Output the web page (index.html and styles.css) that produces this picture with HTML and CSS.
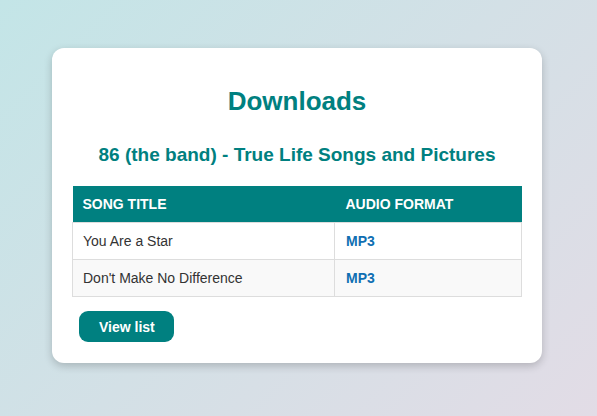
FILE: index.html
```html
<!DOCTYPE html>
<html lang="en">
<head>
<meta charset="utf-8">
<title>Downloads</title>
<link rel="stylesheet" href="styles.css">
</head>
<body>
  <main class="card">
    <h1 class="title">Downloads</h1>
    <h2 class="subtitle">86 (the band) - True Life Songs and Pictures</h2>
    <table class="songs">
      <thead>
        <tr>
          <th class="col-title">Song Title</th>
          <th class="col-format">Audio Format</th>
        </tr>
      </thead>
      <tbody>
        <tr>
          <td>You Are a Star</td>
          <td class="cell-format"><a class="fmt" href="#">MP3</a></td>
        </tr>
        <tr>
          <td>Don't Make No Difference</td>
          <td class="cell-format"><a class="fmt" href="#">MP3</a></td>
        </tr>
      </tbody>
    </table>
    <div class="actions">
      <button class="btn" type="button">View list</button>
    </div>
  </main>
</body>
</html>
```

FILE: styles.css
```css
html, body {
  height: 100%;
}
body {
  margin: 0;
  padding: 48px 3px 0 0;
  box-sizing: border-box;
  font-family: "Liberation Sans", Arial, sans-serif;
  background: linear-gradient(135deg, #c3e5e7 0%, #d3e0e6 50%, #e2dce6 100%);
  color: #333;
}
.card {
  width: 490px;
  box-sizing: border-box;
  margin: 0 auto;
  padding: 20px 20px 21px;
  background: #fff;
  border-radius: 12px;
  box-shadow: 0 3px 8px rgba(0, 0, 0, 0.2);
}
.title {
  margin: 18px 0 27px;
  font-size: 26px;
  font-weight: bold;
  text-align: center;
  color: #008080;
}
.subtitle {
  margin: 0 0 20px;
  font-size: 19px;
  font-weight: bold;
  text-align: center;
  color: #008080;
}
.songs {
  width: 100%;
  border-collapse: collapse;
  font-size: 14px;
}
.songs th {
  background: #008080;
  color: #fff;
  text-transform: uppercase;
  text-align: left;
  font-weight: bold;
  padding: 10px 10px;
  line-height: 16px;
  border: 0;
}
.songs .col-title {
  width: 242px;
}
.songs .col-format,
.songs .cell-format {
  padding-left: 11px;
}
.songs td {
  padding: 10px 10px;
  line-height: 16px;
  border: 1px solid #ddd;
  color: #333;
}
.songs tbody tr:nth-child(even) td {
  background: #f9f9f9;
}
.fmt {
  color: #0f6fb2;
  font-weight: bold;
  text-decoration: none;
}
.actions {
  margin: 14px 0 0 7px;
}
.btn {
  display: inline-block;
  font-family: "Liberation Sans", Arial, sans-serif;
  font-size: 14px;
  font-weight: bold;
  line-height: 16px;
  color: #fff;
  background: #008080;
  border: none;
  border-radius: 9px;
  padding: 8px 19px 7px 20px;
  cursor: pointer;
}
```
